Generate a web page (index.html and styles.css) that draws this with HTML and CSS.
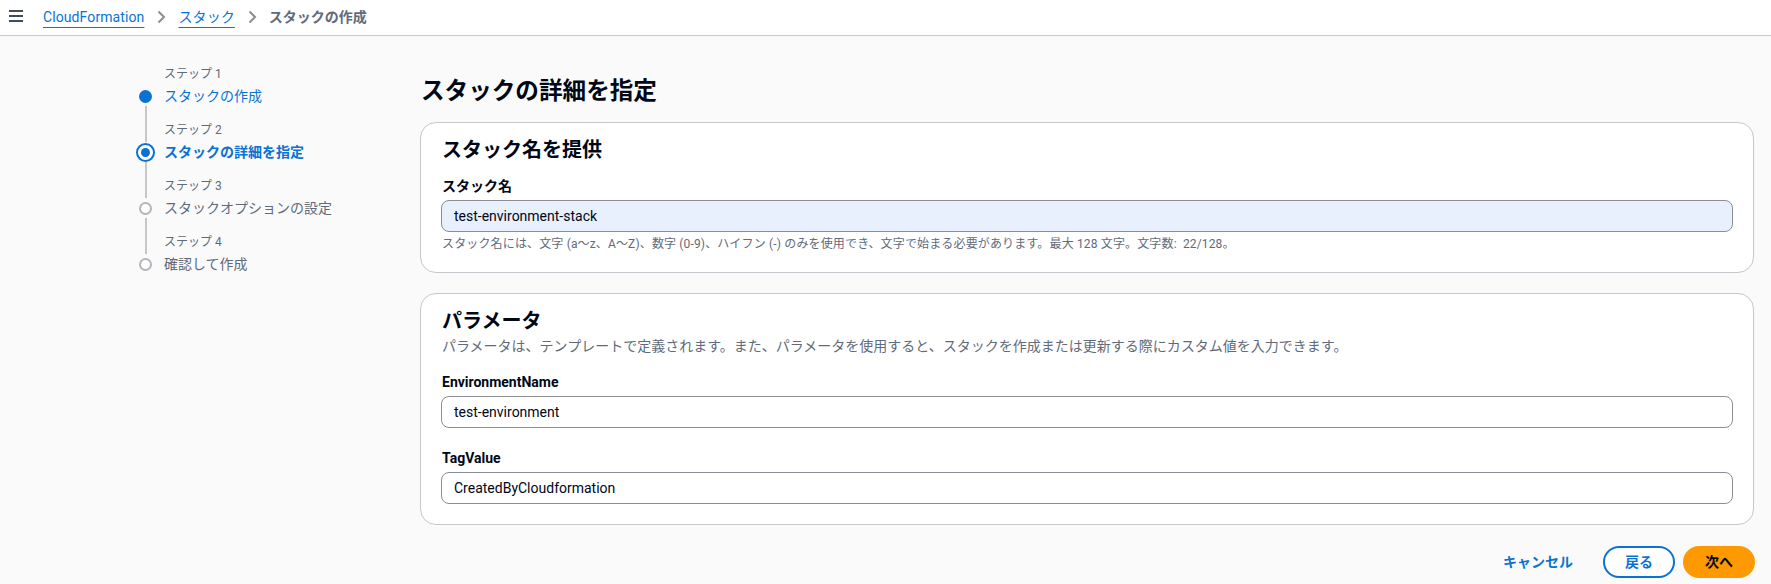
FILE: index.html
```html
<!DOCTYPE html>
<html lang="ja">
<head>
<meta charset="utf-8">
<title>スタックの作成</title>
<link rel="stylesheet" href="styles.css">
</head>
<body>
<header class="topbar">
  <svg class="menu-icon" width="16" height="16" viewBox="0 0 16 16" aria-hidden="true">
    <path d="M1 2h14M1 7h14M1 12h14" stroke="#414d5c" stroke-width="2" fill="none"/>
  </svg>
  <nav class="crumbs">
    <a class="crumb-link" href="#">CloudFormation</a>
    <svg class="chev" width="16" height="16" viewBox="0 0 16 16" aria-hidden="true"><path d="M5.5 2.5l5.5 5.5-5.5 5.5" stroke="#8c8c94" stroke-width="2" fill="none"/></svg>
    <a class="crumb-link" href="#">スタック</a>
    <svg class="chev" width="16" height="16" viewBox="0 0 16 16" aria-hidden="true"><path d="M5.5 2.5l5.5 5.5-5.5 5.5" stroke="#8c8c94" stroke-width="2" fill="none"/></svg>
    <span class="crumb-current">スタックの作成</span>
  </nav>
</header>

<div class="layout">
  <aside class="wizard-nav">
    <div class="step done first">
      <div class="step-rail"><span class="line top"></span><span class="icon-box"><span class="dot-filled"></span></span><span class="line bottom"></span></div>
      <div class="step-text"><div class="step-num">ステップ 1</div><div class="step-title">スタックの作成</div></div>
    </div>
    <div class="step active">
      <div class="step-rail"><span class="line top"></span><span class="icon-box"><span class="dot-ring"><span class="dot-inner"></span></span></span><span class="line bottom"></span></div>
      <div class="step-text"><div class="step-num">ステップ 2</div><div class="step-title">スタックの詳細を指定</div></div>
    </div>
    <div class="step">
      <div class="step-rail"><span class="line top"></span><span class="icon-box"><span class="dot-empty"></span></span><span class="line bottom"></span></div>
      <div class="step-text"><div class="step-num">ステップ 3</div><div class="step-title">スタックオプションの設定</div></div>
    </div>
    <div class="step last">
      <div class="step-rail"><span class="line top"></span><span class="icon-box"><span class="dot-empty"></span></span><span class="line bottom"></span></div>
      <div class="step-text"><div class="step-num">ステップ 4</div><div class="step-title">確認して作成</div></div>
    </div>
  </aside>

  <main class="main">
    <h1 class="page-title">スタックの詳細を指定</h1>

    <section class="card">
      <h2 class="card-title">スタック名を提供</h2>
      <div class="field first-field">
        <label class="field-label">スタック名</label>
        <div class="input autofill">test-environment-stack</div>
        <div class="help">スタック名には、文字 (a〜z、A〜Z)、数字 (0-9)、ハイフン (-) のみを使用でき、文字で始まる必要があります。最大 128 文字。文字数:&nbsp; 22/128。</div>
      </div>
    </section>

    <section class="card">
      <h2 class="card-title">パラメータ</h2>
      <p class="card-desc">パラメータは、テンプレートで定義されます。また、パラメータを使用すると、スタックを作成または更新する際にカスタム値を入力できます。</p>
      <div class="field">
        <label class="field-label">EnvironmentName</label>
        <div class="input">test-environment</div>
      </div>
      <div class="field">
        <label class="field-label">TagValue</label>
        <div class="input">CreatedByCloudformation</div>
      </div>
    </section>

    <div class="actions">
      <button class="btn btn-link">キャンセル</button>
      <button class="btn btn-normal">戻る</button>
      <button class="btn btn-primary">次へ</button>
    </div>
  </main>
</div>
</body>
</html>
```

FILE: styles.css
```css
* { box-sizing: border-box; }

html, body {
  margin: 0;
  padding: 0;
}

body {
  background: #fafafa;
  color: #000716;
  font-family: Roboto, "Noto Sans CJK JP", "Noto Sans", sans-serif;
  font-size: 14px;
  line-height: 20px;
}

.topbar {
  height: 36px;
  background: #ffffff;
  border-bottom: 1px solid #c6c6cd;
  display: flex;
  align-items: center;
  padding: 0 0 2px 8px;
}

.menu-icon {
  display: block;
  margin-top: 1px;
}

.crumbs {
  display: flex;
  align-items: center;
  gap: 9px;
  margin-left: 19px;
}

.crumb-link {
  color: #0972d3;
  text-decoration: underline;
  text-underline-offset: 5px;
  text-decoration-thickness: 1px;
  letter-spacing: 0.1px;
}

.chev { display: block; }

.crumb-current {
  color: #5f6b7a;
  font-weight: 700;
}

.layout {
  display: flex;
}

.wizard-nav {
  width: 420px;
  flex: none;
  padding: 30px 0 0 136px;
}

.step {
  display: flex;
  gap: 9px;
}

.step-rail {
  width: 19px;
  display: flex;
  flex-direction: column;
  align-items: center;
}

.line {
  width: 2px;
  background: #c6c6cd;
}

.line.top { height: 20px; }
.line.bottom { flex: 1; }
.first .line.top,
.last .line.bottom { background: transparent; }

.icon-box {
  width: 20px;
  height: 20px;
  display: flex;
  align-items: center;
  justify-content: center;
}

.dot-filled {
  width: 13px;
  height: 13px;
  border-radius: 50%;
  background: #0972d3;
}

.dot-ring {
  width: 19px;
  height: 19px;
  border-radius: 50%;
  border: 2px solid #0972d3;
  background: #ffffff;
  display: flex;
  align-items: center;
  justify-content: center;
}

.dot-inner {
  width: 9px;
  height: 9px;
  border-radius: 50%;
  background: #0972d3;
}

.dot-empty {
  width: 13px;
  height: 13px;
  border-radius: 50%;
  border: 2px solid #b4b4bb;
  background: #ffffff;
}

.step-text {
  padding-bottom: 16px;
}

.step-num {
  font-size: 12px;
  line-height: 16px;
  color: #5f6b7a;
  margin-bottom: 4px;
}

.step-title {
  font-size: 14px;
  line-height: 20px;
  color: #5f6b7a;
}

.done .step-title { color: #0972d3; }
.active .step-title { color: #0972d3; font-weight: 700; }

.main {
  width: 1334px;
  flex: none;
  padding-top: 40px;
}

.page-title {
  margin: 0 0 16px 1px;
  font-size: 23.6px;
  line-height: 30px;
  font-weight: 700;
  color: #000716;
}

.card {
  background: #ffffff;
  border: 1px solid #c6c6cd;
  border-radius: 16px;
  padding: 15px 20px 20px 20px;
  margin-bottom: 20px;
}

.card-title {
  margin: 0 0 0 1px;
  font-size: 20px;
  line-height: 24px;
  font-weight: 700;
}

.card-desc {
  margin: 3px 0 0 1px;
  color: #5f6b7a;
  font-size: 14px;
  line-height: 20px;
}

.field {
  margin-top: 20px;
  display: flex;
  flex-direction: column;
}

.first-field { margin-top: 14px; }
.card-desc + .field { margin-top: 16px; }

.field-label {
  font-weight: 700;
  font-size: 14px;
  line-height: 20px;
  margin: 0 0 4px 1px;
}

.input {
  height: 32px;
  border: 1px solid #8c8c94;
  border-radius: 8px;
  background: #ffffff;
  padding: 0 12px;
  display: flex;
  align-items: center;
  color: #000716;
  font-size: 14px;
}

.input.autofill {
  background: #e8f0fe;
}

.help {
  margin: 4px 0 0 1px;
  font-size: 12px;
  line-height: 16px;
  color: #5f6b7a;
  letter-spacing: 0.15px;
}

.actions {
  display: flex;
  justify-content: flex-end;
  gap: 8px;
  margin-top: 21px;
  margin-right: -1px;
}

.btn {
  font-family: inherit;
  font-size: 14px;
  line-height: 20px;
  font-weight: 700;
  height: 32px;
  padding: 4px 20px;
  border-radius: 20px;
  border: 2px solid transparent;
  background: transparent;
  cursor: pointer;
}

.btn-link { color: #0972d3; }

.btn-normal {
  color: #0972d3;
  border-color: #0972d3;
  background: #ffffff;
}

.btn-primary {
  background: #ff9900;
  border-color: #ff9900;
  color: #000716;
}
```
